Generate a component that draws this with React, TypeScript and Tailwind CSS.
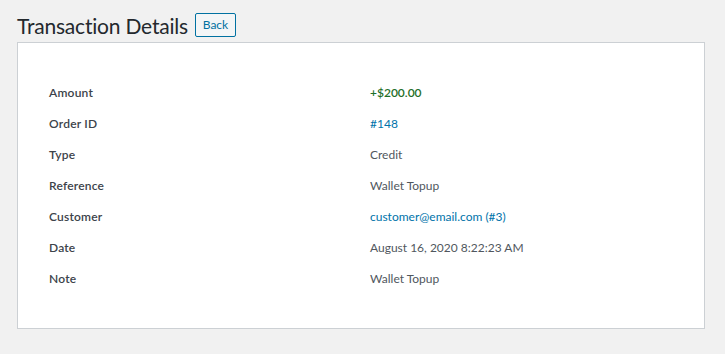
const rows: { label: string; value: string; kind?: "green" | "link" }[] = [
  { label: "Amount", value: "+$200.00", kind: "green" },
  { label: "Order ID", value: "#148", kind: "link" },
  { label: "Type", value: "Credit" },
  { label: "Reference", value: "Wallet Topup" },
  { label: "Customer", value: "customer@email.com (#3)", kind: "link" },
  { label: "Date", value: "August 16, 2020 8:22:23 AM" },
  { label: "Note", value: "Wallet Topup" },
];

export default function App() {
  return (
    <div className="min-h-[354px] bg-[#f1f1f1] pl-[17px] pr-[20px] pt-[9px] font-['Lato',sans-serif] text-[#23282d]">
      {/* header */}
      <div className="flex items-center gap-[7px] h-[32px]">
        <h1 className="text-[21px] leading-[29px] font-normal tracking-[-0.2px]">
          Transaction Details
        </h1>
        <button className="h-[24px] w-[41px] rounded-[2px] border border-[#0071a1] bg-[#f3f5f6] text-[#0071a1] text-[12px] leading-[20px]">
          Back
        </button>
      </div>

      {/* details panel */}
      <div className="mt-[1px] bg-white border border-[#ccd0d4] px-[31px] py-[34px]">
        {rows.map((r) => (
          <div key={r.label} className="flex h-[31px] items-center text-[12px] leading-[16px]">
            <div className="w-[321px] font-semibold text-[#3c434a] tracking-[0.2px]">{r.label}</div>
            <div
              className={
                r.kind === "green"
                  ? "text-[#1f6f2a] font-semibold"
                  : r.kind === "link"
                  ? "text-[#0073aa]"
                  : "text-[#50575e]"
              }
            >
              {r.value}
            </div>
          </div>
        ))}
      </div>
    </div>
  );
}
